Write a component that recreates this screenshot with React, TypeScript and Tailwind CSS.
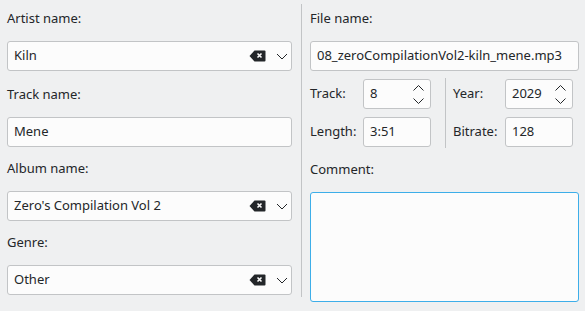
import React from "react";

const ClearIcon = () => (
  <svg width="17" height="12" viewBox="0 0 17 12" className="shrink-0">
    <path d="M5.5 0.5 H15.5 a1 1 0 0 1 1 1 V10.5 a1 1 0 0 1 -1 1 H5.5 L0.5 6 Z" fill="#232629" />
    <path d="M8.5 3.5 L12.5 7.5 M12.5 3.5 L8.5 7.5" stroke="#fcfcfc" strokeWidth="1.6" />
  </svg>
);

const Chevron = () => (
  <svg width="12" height="7" viewBox="0 0 12 7" className="shrink-0">
    <polyline points="1,1 6,6 11,1" fill="none" stroke="#232629" strokeWidth="1" />
  </svg>
);

const SpinArrows = () => (
  <div className="flex flex-col gap-[7px] pr-[6px]">
    <svg width="11" height="6" viewBox="0 0 11 6">
      <polyline points="0.5,5.5 5.5,0.5 10.5,5.5" fill="none" stroke="#232629" strokeWidth="1" />
    </svg>
    <svg width="11" height="6" viewBox="0 0 11 6">
      <polyline points="0.5,0.5 5.5,5.5 10.5,0.5" fill="none" stroke="#232629" strokeWidth="1" />
    </svg>
  </div>
);

function Label({ text, className = "" }: { text: string; className?: string }) {
  return <div className={`h-[22px] flex items-center ${className}`}>{text}</div>;
}

function Field({ value, combo }: { value: string; combo?: boolean }) {
  return (
    <div className="h-[30px] flex items-center bg-[#fcfcfc] border border-[#c2c4c6] rounded-[3px] pl-[6px]">
      <span className="flex-1 truncate">{value}</span>
      {combo && (
        <div className="flex items-center gap-[10px] pr-[3px]">
          <ClearIcon />
          <Chevron />
        </div>
      )}
    </div>
  );
}

function Spin({ value, arrows }: { value: string; arrows?: boolean }) {
  return (
    <div className="w-[68px] h-[30px] flex items-center bg-[#fcfcfc] border border-[#c2c4c6] rounded-[3px] pl-[6px]">
      <span className="flex-1">{value}</span>
      {arrows && <SpinArrows />}
    </div>
  );
}

export default function App() {
  return (
    <div
      className="w-[585px] h-[311px] bg-[#eff0f1] text-[#232629] text-[13px] flex pl-[7px]"
      style={{ fontFamily: '"Noto Sans", sans-serif' }}
    >
      {/* Left column */}
      <div className="w-[285px] pt-[8px] flex flex-col">
        <Label text="Artist name:" className="mb-[11px]" />
        <Field value="Kiln" combo />
        <Label text="Track name:" className="mt-[13px] mb-[11px]" />
        <Field value="Mene" />
        <Label text="Album name:" className="mt-[11px] mb-[11px]" />
        <Field value="Zero's Compilation Vol 2" combo />
        <Label text="Genre:" className="mt-[11px] mb-[11px]" />
        <Field value="Other" combo />
      </div>

      <div className="ml-[9px] mt-[4px] w-px h-[293px] bg-[#c2c4c6]" />

      {/* Right column */}
      <div className="ml-[8px] w-[269px] pt-[8px] flex flex-col">
        <Label text="File name:" className="mb-[11px]" />
        <Field value="08_zeroCompilationVol2-kiln_mene.mp3" />
        <div className="flex mt-[8px]">
          <div className="flex flex-col gap-[8px]">
            <div className="flex items-center">
              <span className="w-[53px]">Track:</span>
              <Spin value="8" arrows />
            </div>
            <div className="flex items-center">
              <span className="w-[53px]">Length:</span>
              <Spin value="3:51" />
            </div>
          </div>
          <div className="ml-[14px] mr-[7px] -mt-[1px] w-px h-[70px] bg-[#c2c4c6]" />
          <div className="flex flex-col gap-[8px]">
            <div className="flex items-center">
              <span className="w-[52px]">Year:</span>
              <Spin value="2029" arrows />
            </div>
            <div className="flex items-center">
              <span className="w-[52px]">Bitrate:</span>
              <Spin value="128" />
            </div>
          </div>
        </div>
        <Label text="Comment:" className="mt-[11px] mb-[11px]" />
        <div className="h-[110px] bg-[#fcfcfc] border border-[#3daee9] rounded-[3px]" />
      </div>
    </div>
  );
}
